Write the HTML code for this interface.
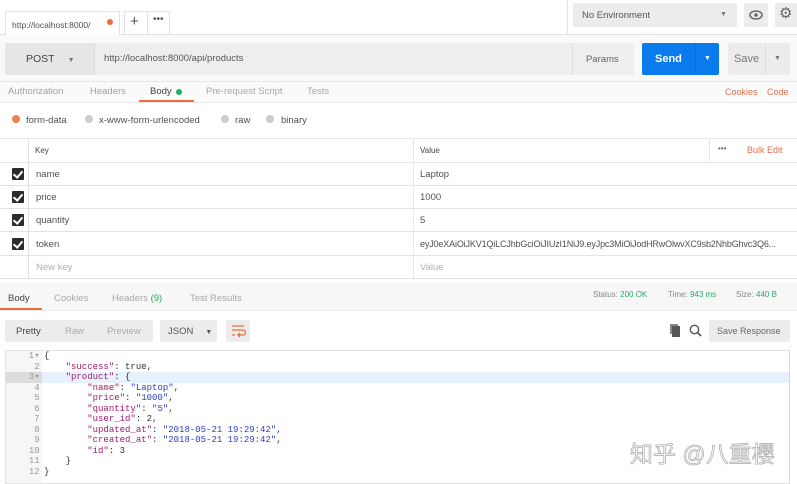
<!DOCTYPE html>
<html><head><meta charset="utf-8"><style>
*{margin:0;padding:0;box-sizing:border-box}
body{width:797px;height:484px;overflow:hidden;background:#fff;font-family:"Liberation Sans","DejaVu Sans",sans-serif;font-size:9.5px;color:#505050;position:relative}
.a{position:absolute}
.gray{background:#ececec}
.hl{border-bottom:1px solid #e4e4e4}
.cb{position:absolute;left:12px;width:12px;height:12px;background:#2b2b2b;border-radius:1px}
.cb:after{content:"";position:absolute;left:3px;top:1px;width:4px;height:7px;border:solid #fff;border-width:0 2px 2px 0;transform:rotate(40deg)}
.code{font-family:"Liberation Mono","DejaVu Sans Mono",monospace;font-size:9px;line-height:10.55px;white-space:pre}
.k{color:#a11b6e}.s{color:#2a3fc2}
</style></head><body>
<div class="a" style="left:0;top:34px;width:797px;height:1px;background:#e2e2e2"></div>
<div class="a" style="left:5px;top:11px;width:115px;height:24px;background:#fff;border:1px solid #e2e2e2;border-bottom:none;font-size:8.5px;padding:8px 0 0 6px">http://localhost:8000/</div>
<div class="a" style="left:107px;top:19px;width:6px;height:6px;border-radius:50%;background:#f26b3a"></div>
<div class="a" style="left:124px;top:11px;width:46px;height:24px;border:1px solid #e2e2e2;border-bottom:none"></div>
<div class="a" style="left:147px;top:11px;width:1px;height:23px;background:#e2e2e2"></div>
<div class="a" style="left:130px;top:13px;font-size:15px;color:#555">+</div>
<div class="a" style="left:153px;top:14px;font-size:10px;color:#555">•••</div>
<div class="a" style="left:567px;top:0;width:1px;height:34px;background:#e2e2e2"></div>
<div class="a gray" style="left:573px;top:3px;width:164px;height:24px;border-radius:2px;padding:7px 0 0 9px;font-size:9.5px;color:#555">No Environment</div>
<div class="a" style="left:720px;top:11px;font-size:7px;color:#777">▼</div>
<div class="a gray" style="left:744px;top:3px;width:24px;height:24px;border-radius:2px"></div>
<svg class="a" style="left:749px;top:9px" width="14" height="12" viewBox="0 0 14 12"><ellipse cx="7" cy="6" rx="6" ry="4" fill="none" stroke="#666" stroke-width="1.5"/><circle cx="7" cy="6" r="1.8" fill="#666"/></svg>
<div class="a gray" style="left:775px;top:3px;width:24px;height:24px;border-radius:2px"></div>
<div class="a" style="left:779px;top:5px;font-size:15px;line-height:18px;color:#666">⚙</div>
<div class="a" style="left:0;top:35px;width:797px;height:47px;background:#f9f9f9;border-bottom:1px solid #e6e6e6"></div>
<div class="a" style="left:5px;top:43px;width:629px;height:32px;background:#eeeeee;border-radius:2px"></div>
<div class="a" style="left:5px;top:43px;width:90px;height:32px;background:#e6e6e6;border-right:1px solid #ddd;font-size:10.5px;color:#444;padding:10px 0 0 21px">POST<span style="font-size:7px;color:#777;margin-left:13px">▼</span></div>
<div class="a" style="left:104px;top:53px;font-size:9.5px;color:#555">http://localhost:8000/api/products</div>
<div class="a" style="left:572px;top:43px;width:62px;height:32px;border-left:1px solid #ddd;font-size:9.5px;color:#666;padding:11px 0 0 13px">Params</div>
<div class="a" style="left:642px;top:43px;width:77px;height:32px;background:#097bed;border-radius:2px"></div>
<div class="a" style="left:695px;top:43px;width:1px;height:32px;background:#0a6fd4"></div>
<div class="a" style="left:655px;top:53px;font-size:11px;font-weight:bold;color:#fff">Send</div>
<div class="a" style="left:704px;top:55px;font-size:7px;color:#fff">▼</div>
<div class="a" style="left:728px;top:43px;width:62px;height:32px;background:#ececec;border-radius:2px"></div>
<div class="a" style="left:765px;top:43px;width:1px;height:32px;background:#ddd"></div>
<div class="a" style="left:734px;top:53px;font-size:11px;color:#777">Save</div>
<div class="a" style="left:774px;top:55px;font-size:7px;color:#777">▼</div>
<div class="a" style="left:0;top:82px;width:797px;height:21px;background:#fafafa;border-bottom:1px solid #e8e8e8"></div>
<div class="a" style="left:8px;top:86px;color:#a0a0a0">Authorization</div>
<div class="a" style="left:90px;top:86px;color:#a0a0a0">Headers</div>
<div class="a" style="left:150px;top:86px;color:#444">Body</div>
<div class="a" style="left:176px;top:89px;width:6px;height:6px;border-radius:50%;background:#27ae60"></div>
<div class="a" style="left:139px;top:100px;width:55px;height:2px;background:#f26b3a"></div>
<div class="a" style="left:206px;top:86px;color:#a8a8a8">Pre-request Script</div>
<div class="a" style="left:307px;top:86px;color:#a8a8a8">Tests</div>
<div class="a" style="left:725px;top:87px;color:#e07050;font-size:9px">Cookies</div>
<div class="a" style="left:767px;top:87px;color:#e07050;font-size:9px">Code</div>
<div class="a" style="left:12px;top:115px;width:8px;height:8px;border-radius:50%;background:#f08050"></div>
<div class="a" style="left:26px;top:115px;font-size:9.5px">form-data</div>
<div class="a" style="left:85px;top:115px;width:8px;height:8px;border-radius:50%;background:#ccc"></div>
<div class="a" style="left:99px;top:115px;font-size:9.5px">x-www-form-urlencoded</div>
<div class="a" style="left:221px;top:115px;width:8px;height:8px;border-radius:50%;background:#ccc"></div>
<div class="a" style="left:235px;top:115px;font-size:9.5px">raw</div>
<div class="a" style="left:266px;top:115px;width:8px;height:8px;border-radius:50%;background:#ccc"></div>
<div class="a" style="left:281px;top:115px;font-size:9.5px">binary</div>
<div class="a" style="left:0;top:138px;width:797px;height:1px;background:#e6e6e6"></div>
<div class="a" style="left:28px;top:138px;width:1px;height:141px;background:#e0e0e0"></div>
<div class="a" style="left:413px;top:138px;width:1px;height:141px;background:#e6e6e6"></div>
<div class="a hl" style="left:0;top:138px;width:797px;height:25px"></div>
<div class="a" style="left:35px;top:146px;font-size:8px;color:#444">Key</div>
<div class="a" style="left:420px;top:146px;font-size:8px;color:#444">Value</div>
<div class="a" style="left:709px;top:138px;width:1px;height:24px;background:#e6e6e6"></div>
<div class="a" style="left:718px;top:144px;font-size:8px;color:#666">•••</div>
<div class="a" style="left:747px;top:145px;font-size:9px;color:#e07050">Bulk Edit</div>
<div class="a hl" style="left:0;top:163px;width:797px;height:23px"></div>
<div class="a hl" style="left:0;top:186px;width:797px;height:23px"></div>
<div class="a hl" style="left:0;top:209px;width:797px;height:23px"></div>
<div class="a hl" style="left:0;top:232px;width:797px;height:24px"></div>
<div class="a hl" style="left:0;top:256px;width:797px;height:23px"></div>
<div class="cb" style="top:168px"></div><div class="cb" style="top:191px"></div><div class="cb" style="top:214px"></div><div class="cb" style="top:238px"></div>
<div class="a" style="left:36px;top:169px">name</div><div class="a" style="left:420px;top:169px">Laptop</div>
<div class="a" style="left:36px;top:192px">price</div><div class="a" style="left:420px;top:192px">1000</div>
<div class="a" style="left:36px;top:215px">quantity</div><div class="a" style="left:420px;top:215px">5</div>
<div class="a" style="left:36px;top:239px">token</div><div class="a" style="left:420px;top:239px;font-size:9px;letter-spacing:-0.15px">eyJ0eXAiOiJKV1QiLCJhbGciOiJIUzI1NiJ9.eyJpc3MiOiJodHRwOlwvXC9sb2NhbGhvc3Q6...</div>
<div class="a" style="left:36px;top:262px;color:#b0b0b0">New key</div><div class="a" style="left:420px;top:262px;color:#b0b0b0">Value</div>
<div class="a" style="left:0;top:283px;width:797px;height:28px;background:#f7f7f7;border-bottom:1px solid #eaeaea"></div>
<div class="a" style="left:8px;top:293px;color:#444">Body</div>
<div class="a" style="left:0;top:308px;width:42px;height:2px;background:#f26b3a"></div>
<div class="a" style="left:54px;top:293px;color:#a8a8a8">Cookies</div>
<div class="a" style="left:112px;top:293px;color:#a8a8a8">Headers <span style="color:#27ae60">(9)</span></div>
<div class="a" style="left:190px;top:293px;color:#a8a8a8">Test Results</div>
<div class="a" style="left:593px;top:290px;font-size:8px;color:#888">Status: <span style="color:#27ae60">200 OK</span></div>
<div class="a" style="left:668px;top:290px;font-size:8px;color:#888">Time: <span style="color:#27ae60">943 ms</span></div>
<div class="a" style="left:736px;top:290px;font-size:8px;color:#888">Size: <span style="color:#27ae60">440 B</span></div>
<div class="a gray" style="left:5px;top:320px;width:148px;height:22px;border-radius:2px"></div>
<div class="a" style="left:16px;top:326px;color:#444">Pretty</div>
<div class="a" style="left:65px;top:326px;color:#aaa">Raw</div>
<div class="a" style="left:107px;top:326px;color:#aaa">Preview</div>
<div class="a gray" style="left:160px;top:320px;width:57px;height:22px;border-radius:2px;padding:6px 0 0 8px;color:#555">JSON<span style="font-size:7px;margin-left:12px">▼</span></div>
<div class="a gray" style="left:226px;top:320px;width:24px;height:22px;border-radius:2px"></div>
<svg class="a" style="left:230px;top:324px" width="16" height="14" viewBox="0 0 16 14"><path d="M2 2H14M2 6H13a2.5 2.5 0 0 1 0 5H8M10 9l-2 2 2 2M2 11H5" fill="none" stroke="#f26b3a" stroke-width="1.3"/></svg>
<svg class="a" style="left:669px;top:324px" width="12" height="13" viewBox="0 0 12 13"><rect x="1" y="0" width="8" height="10" fill="#888"/><rect x="3" y="2" width="8" height="11" fill="#555"/></svg>
<svg class="a" style="left:689px;top:324px" width="13" height="13" viewBox="0 0 13 13"><circle cx="5.5" cy="5.5" r="4.2" fill="none" stroke="#555" stroke-width="1.4"/><path d="M8.5 8.5L12 12" stroke="#555" stroke-width="1.6"/></svg>
<div class="a gray" style="left:709px;top:320px;width:81px;height:22px;border-radius:2px;padding:6px 0 0 8px;color:#666;font-size:9px">Save Response</div>
<div class="a" style="left:5px;top:350px;width:785px;height:134px;border:1px solid #e2e2e2;border-right-color:#d8d8d8"></div>
<div class="a" style="left:6px;top:351px;width:36px;height:132px;background:#f6f6f6"></div>
<div class="a" style="left:42px;top:372px;width:747px;height:11px;background:#e8f2fe"></div>
<div class="a" style="left:6px;top:372px;width:36px;height:11px;background:#dcdcdc"></div>
<div class="a code" style="left:18px;top:351px;color:#999;text-align:right">  1▾
  2
  3▾
  4
  5
  6
  7
  8
  9
 10
 11
 12</div>
<div class="a code" style="left:44px;top:351px;color:#333">{
    <span class="k">"success"</span>: true,
    <span class="k">"product"</span>: {
        <span class="k">"name"</span>: <span class="s">"Laptop"</span>,
        <span class="k">"price"</span>: <span class="s">"1000"</span>,
        <span class="k">"quantity"</span>: <span class="s">"5"</span>,
        <span class="k">"user_id"</span>: 2,
        <span class="k">"updated_at"</span>: <span class="s">"2018-05-21 19:29:42"</span>,
        <span class="k">"created_at"</span>: <span class="s">"2018-05-21 19:29:42"</span>,
        <span class="k">"id"</span>: 3
    }
}</div>
<div class="a" style="left:630px;top:435px;font-size:23px;color:#fafafa;-webkit-text-stroke:0.7px #aaa;font-family:'Liberation Sans','Noto Sans CJK SC',sans-serif">知乎 @八重樱</div>
</body></html>
